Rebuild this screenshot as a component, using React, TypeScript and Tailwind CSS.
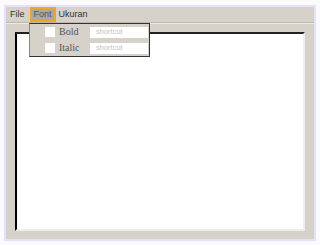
import React from "react";

function MenuItem({ label }: { label: string }) {
  return (
    <div className="flex h-[13px] items-center gap-[4px]">
      <span className="h-[10px] w-[10px] bg-white" />
      <span className="w-[27px] font-['Liberation_Serif',serif] text-[10px] font-normal leading-none text-[#555]">
        {label}
      </span>
      <span className="flex h-[11px] w-[58px] items-center bg-white pl-[6px] font-['Liberation_Sans',sans-serif] text-[7.5px] text-[#c4c4c4]">
        shortcut
      </span>
    </div>
  );
}

export default function App() {
  return (
    <div className="h-[245px] w-[320px] bg-[#fafaff] pl-[4px] pt-[5px]">
      <div className="relative flex h-[236px] w-[312px] flex-col border-2 border-[#e2e2fa] bg-[#d6d2ca] font-['Liberation_Sans',sans-serif]">
        {/* menu bar */}
        <div className="flex h-[16px] items-center border-b border-[#bdb9b1] text-[9px] text-[#333]">
          <span className="px-[4px]">File</span>
          <span className="ml-[1px] flex h-[15px] items-center border-2 border-[#f0a428] bg-[#a9a8a6] px-[2px] text-[#555]">
            Font
          </span>
          <span className="px-[3px]">Ukuran</span>
        </div>
        <div className="h-px bg-[#ecebe7]" />

        {/* text area */}
        <div className="flex flex-1 px-[9px] pb-[8px] pt-[8px]">
          <div className="flex-1 border-2 border-l-black border-t-[#222] border-b-[#eeeeee] border-r-[#eeeeee] bg-white" />
        </div>

        {/* dropdown */}
        <div className="absolute left-[23px] top-[16px] flex h-[34px] w-[121px] flex-col justify-center gap-[3px] border border-[#333] border-l-[#8a8780] bg-[#d6d2ca] pl-[15px]">
          <MenuItem label="Bold" />
          <MenuItem label="Italic" />
        </div>
      </div>
    </div>
  );
}
